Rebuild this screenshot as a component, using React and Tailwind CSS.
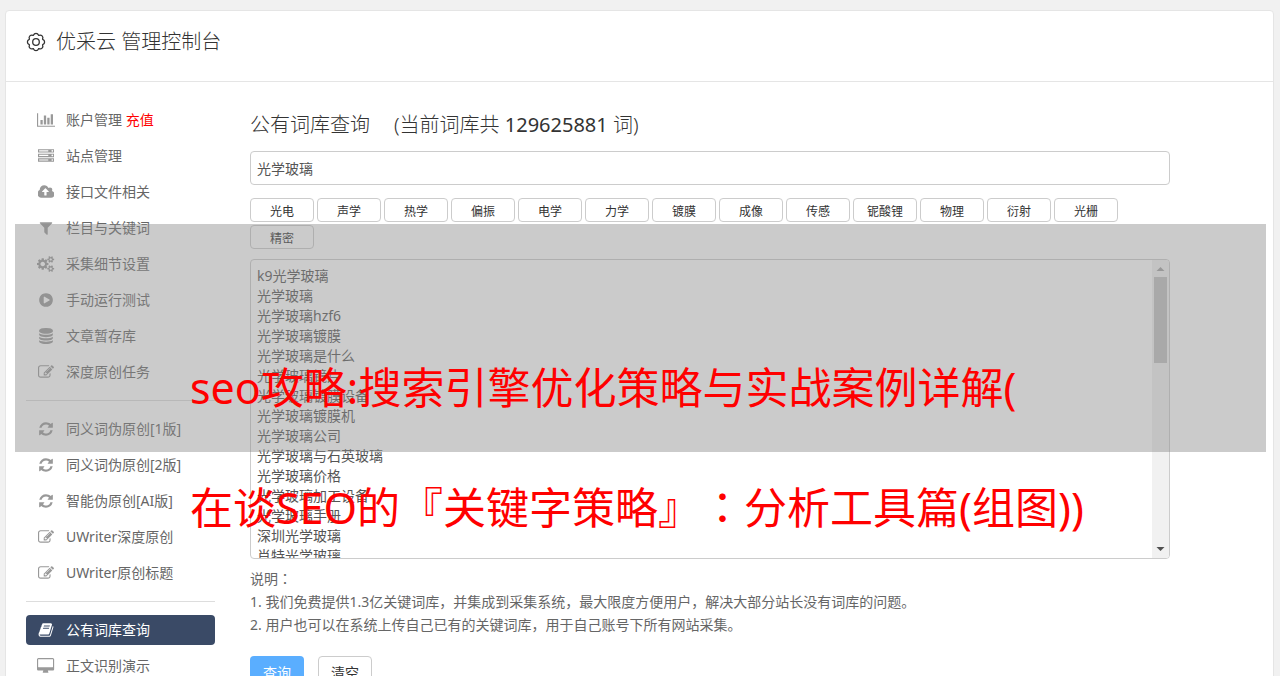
import {useState} from 'react';

const ICONS = {
  chart: {
    width: 2048,
    path: 'M640 896v512h-256v-512h256zm384-512v1024h-256v-1024h256zm1024 1152v128h-2048v-1536h128v1408h1920zm-640-896v768h-256v-768h256zm384-384v1152h-256v-1152h256z',
  },
  server: {
    width: 1792,
    path: 'M128 1408h1024v-128h-1024v128zm0-512h1024v-128h-1024v128zm1568 448q0-40-28-68t-68-28-68 28-28 68 28 68 68 28 68-28 28-68zm-1568-960h1024v-128h-1024v128zm1568 448q0-40-28-68t-68-28-68 28-28 68 28 68 68 28 68-28 28-68zm0-512q0-40-28-68t-68-28-68 28-28 68 28 68 68 28 68-28 28-68zm96 832v384h-1792v-384h1792zm0-512v384h-1792v-384h1792zm0-512v384h-1792v-384h1792z',
  },
  upload: {
    width: 1856,
    path: 'M1216 864q0-14-9-23l-352-352q-9-9-23-9t-23 9l-351 351q-10 12-10 24 0 14 9 23t23 9h224v352q0 13 9.5 22.5t22.5 9.5h192q13 0 22.5-9.5t9.5-22.5v-352h224q13 0 22.5-9.5t9.5-22.5zm640 288q0 159-112.5 271.5t-271.5 112.5h-1088q-185 0-316.5-131.5t-131.5-316.5q0-130 70-240t188-165q-2-30-2-43 0-212 150-362t362-150q156 0 285.5 87t188.5 231q71-62 166-62 106 0 181 75t75 181q0 76-41 138 130 31 213.5 135.5t83.5 238.5z',
  },
  filter: {
    width: 1792,
    path: 'M1595 295q17 41-14 70l-493 493v742q0 42-39 59-13 5-25 5-27 0-45-19l-256-256q-19-19-19-45v-486l-493-493q-31-29-14-70 17-39 59-39h1280q42 0 59 39z',
  },
  cogs: {
    width: 1920,
    path: 'M896 896q0-106-75-181t-181-75-181 75-75 181 75 181 181 75 181-75 75-181zm768 512q0-52-38-90t-90-38-90 38-38 90q0 53 37.5 90.5t90.5 37.5 90.5-37.5 37.5-90.5zm0-1024q0-52-38-90t-90-38-90 38-38 90q0 53 37.5 90.5t90.5 37.5 90.5-37.5 37.5-90.5zm-384 421v185q0 10-7 19.5t-16 10.5l-155 24q-11 35-32 76 34 48 90 115 7 11 7 20 0 12-7 19-23 30-82.5 89.5t-78.5 59.5q-11 0-21-7l-115-90q-37 19-77 31-11 108-23 155-7 24-30 24h-186q-11 0-20-7.5t-10-17.5l-23-153q-34-10-75-31l-118 89q-7 7-20 7-11 0-21-8-144-133-144-160 0-9 7-19 10-14 41-53t47-61q-23-44-35-82l-152-24q-10-1-17-9.5t-7-19.5v-185q0-10 7-19.5t16-10.5l155-24q11-35 32-76-34-48-90-115-7-11-7-20 0-12 7-20 22-30 82-89t79-59q11 0 21 7l115 90q34-18 77-32 11-108 23-154 7-24 30-24h186q11 0 20 7.5t10 17.5l23 153q34 10 75 31l118-89q8-7 20-7 11 0 21 8 144 133 144 160 0 8-7 19-12 16-42 54t-45 60q23 48 34 82l152 23q10 2 17 10.5t7 19.5zm640 533v140q0 16-149 31-12 27-30 52 51 113 51 138 0 4-4 7-122 71-124 71-8 0-46-47t-52-68q-20 2-30 2t-30-2q-14 21-52 68t-46 47q-2 0-124-71-4-3-4-7 0-25 51-138-18-25-30-52-149-15-149-31v-140q0-16 149-31 13-29 30-52-51-113-51-138 0-4 4-7 4-2 35-20t59-34 30-16q8 0 46 46.5t52 67.5q20-2 30-2t30 2q51-71 92-112l6-2q4 0 124 70 4 3 4 7 0 25-51 138 17 23 30 52 149 15 149 31zm0-1024v140q0 16-149 31-12 27-30 52 51 113 51 138 0 4-4 7-122 71-124 71-8 0-46-47t-52-68q-20 2-30 2t-30-2q-14 21-52 68t-46 47q-2 0-124-71-4-3-4-7 0-25 51-138-18-25-30-52-149-15-149-31v-140q0-16 149-31 13-29 30-52-51-113-51-138 0-4 4-7 4-2 35-20t59-34 30-16q8 0 46 46.5t52 67.5q20-2 30-2t30 2q51-71 92-112l6-2q4 0 124 70 4 3 4 7 0 25-51 138 17 23 30 52 149 15 149 31z',
  },
  play: {
    width: 1792,
    path: 'M896 128q209 0 385.5 103t279.5 279.5 103 385.5-103 385.5-279.5 279.5-385.5 103-385.5-103-279.5-279.5-103-385.5 103-385.5 279.5-279.5 385.5-103zm384 823q32-18 32-55t-32-55l-544-320q-31-19-64-1-32 19-32 56v640q0 37 32 56 16 8 32 8 17 0 32-9z',
  },
  database: {
    width: 1792,
    path: 'M896 768q237 0 443-43t325-127v170q0 69-103 128t-280 93.5-385 34.5-385-34.5-280-93.5-103-128v-170q119 84 325 127t443 43zm0 768q237 0 443-43t325-127v170q0 69-103 128t-280 93.5-385 34.5-385-34.5-280-93.5-103-128v-170q119 84 325 127t443 43zm0-384q237 0 443-43t325-127v170q0 69-103 128t-280 93.5-385 34.5-385-34.5-280-93.5-103-128v-170q119 84 325 127t443 43zm0-1152q208 0 385 34.5t280 93.5 103 128v128q0 69-103 128t-280 93.5-385 34.5-385-34.5-280-93.5-103-128v-128q0-69 103-128t280-93.5 385-34.5z',
  },
  edit: {
    width: 1792,
    path: 'M888 1184l116-116-152-152-116 116v56h96v96h56zm440-720q-16-16-33 1l-350 350q-17 17-1 33t33-1l350-350q17-17 1-33zm80 594v190q0 119-84.5 203.5t-203.5 84.5h-832q-119 0-203.5-84.5t-84.5-203.5v-832q0-119 84.5-203.5t203.5-84.5h832q63 0 117 25 15 7 18 23 3 17-9 29l-49 49q-14 14-32 8-23-6-45-6h-832q-66 0-113 47t-47 113v832q0 66 47 113t113 47h832q66 0 113-47t47-113v-126q0-13 9-22l64-64q15-15 35-7t20 29zm-96-738l288 288-672 672h-288v-288zm444 132l-92 92-288-288 92-92q28-28 68-28t68 28l152 152q28 28 28 68t-28 68z',
  },
  refresh: {
    width: 1792,
    path: 'M1639 1056q0 5-1 7-64 268-268 434.5t-478 166.5q-146 0-282.5-55t-243.5-157l-129 129q-19 19-45 19t-45-19-19-45v-448q0-26 19-45t45-19h448q26 0 45 19t19 45-19 45l-137 137q71 66 161 102t187 36q134 0 250-65t186-179q11-17 53-117 8-23 30-23h192q13 0 22.5 9.5t9.5 22.5zm25-800v448q0 26-19 45t-45 19h-448q-26 0-45-19t-19-45 19-45l138-138q-148-137-349-137-134 0-250 65t-186 179q-11 17-53 117-8 23-30 23h-199q-13 0-22.5-9.5t-9.5-22.5v-7q65-268 270-434.5t480-166.5q146 0 284 55.5t245 156.5l130-129q19-19 45-19t45 19 19 45z',
  },
  book: {
    width: 1792,
    path: 'M1703 478q40 57 18 129l-275 906q-19 64-76.5 107.5t-122.5 43.5h-923q-77 0-148.5-53.5t-99.5-131.5q-24-67-2-127 0-4 3-27t4-37q1-8-3-21.5t-3-19.5q2-11 8-21t16.5-23.5 16.5-23.5q23-38 45-91.5t30-91.5q3-10 .5-30t-.5-28q3-11 17-28t17-23q21-36 42-92t25-90q1-9-2.5-32t.5-28q4-13 22-30.5t22-22.5q19-26 42.5-84.5t27.5-96.5q1-8-3-25.5t-2-26.5q2-8 9-18t18-23 17-21q8-12 16.5-30.5t15-35 16-36 19.5-32 26.5-23.5 36-11.5 47.5 5.5l-1 3q38-9 51-9h761q74 0 114 56t18 130l-274 906q-36 119-71.5 153.5t-128.5 34.5h-869q-27 0-38 15-11 16-1 43 24 70 144 70h923q29 0 56-15.5t35-41.5l300-987q7-22 5-57 38 15 59 43zm-1064 2q-4 13 2 22.5t20 9.5h608q13 0 25.5-9.5t16.5-22.5l21-64q4-13-2-22.5t-20-9.5h-608q-13 0-25.5 9.5t-16.5 22.5zm-83 256q-4 13 2 22.5t20 9.5h608q13 0 25.5-9.5t16.5-22.5l21-64q4-13-2-22.5t-20-9.5h-608q-13 0-25.5 9.5t-16.5 22.5z',
  },
  desktop: {
    width: 1920,
    left: -64,
    path: 'M1728 992v-832q0-13-9.5-22.5t-22.5-9.5h-1600q-13 0-22.5 9.5t-9.5 22.5v832q0 13 9.5 22.5t22.5 9.5h1600q13 0 22.5-9.5t9.5-22.5zm128-832v1088q0 66-47 113t-113 47h-544q0 37 16 77.5t32 71 16 43.5q0 26-19 45t-45 19h-512q-26 0-45-19t-19-45q0-14 16-44t32-70 16-78h-544q-66 0-113-47t-47-113v-1088q0-66 47-113t113-47h1600q66 0 113 47t47 113z',
  },
};

const MENU = [
  [
    {icon: 'chart', label: '账户管理', extra: '充值'},
    {icon: 'server', label: '站点管理'},
    {icon: 'upload', label: '接口文件相关'},
    {icon: 'filter', label: '栏目与关键词'},
    {icon: 'cogs', label: '采集细节设置'},
    {icon: 'play', label: '手动运行测试'},
    {icon: 'database', label: '文章暂存库'},
    {icon: 'edit', label: '深度原创任务'},
  ],
  [
    {icon: 'refresh', label: '同义词伪原创[1版]'},
    {icon: 'refresh', label: '同义词伪原创[2版]'},
    {icon: 'refresh', label: '智能伪原创[AI版]'},
    {icon: 'edit', label: 'UWriter深度原创'},
    {icon: 'edit', label: 'UWriter原创标题'},
  ],
  [
    {icon: 'book', label: '公有词库查询', active: true},
    {icon: 'desktop', label: '正文识别演示'},
  ],
];

const TAGS = [
  '光电',
  '声学',
  '热学',
  '偏振',
  '电学',
  '力学',
  '镀膜',
  '成像',
  '传感',
  '铌酸锂',
  '物理',
  '衍射',
  '光栅',
  '精密',
];

const WORDS = [
  'k9光学玻璃',
  '光学玻璃',
  '光学玻璃hzf6',
  '光学玻璃镀膜',
  '光学玻璃是什么',
  '光学玻璃镜片',
  '光学玻璃镀膜设备',
  '光学玻璃镀膜机',
  '光学玻璃公司',
  '光学玻璃与石英玻璃',
  '光学玻璃价格',
  '光学玻璃加工设备',
  '光学玻璃手册',
  '深圳光学玻璃',
  '肖特光学玻璃',
];

const NOTES = [
  '说明：',
  '1. 我们免费提供1.3亿关键词库，并集成到采集系统，最大限度方便用户，解决大部分站长没有词库的问题。',
  '2. 用户也可以在系统上传自己已有的关键词库，用于自己账号下所有网站采集。',
];

function Icon({name}) {
  const {width, left = 0, path} = ICONS[name];
  return (
    <svg
      className="h-4 w-auto"
      viewBox={`${left} 0 ${width} 1792`}
      fill="currentColor"
      aria-hidden="true"
    >
      <path d={path} />
    </svg>
  );
}

function GearIcon() {
  return (
    <svg
      className="size-5"
      viewBox="0 0 20 20"
      fill="none"
      stroke="currentColor"
      strokeWidth="1.3"
      strokeLinejoin="round"
      aria-hidden="true"
    >
      <path d="M7.4 3.3Q8.2 1.4 10 1.4T12.6 3.3L12.9 3.4Q14.8 2.6 16.1 3.9T16.6 7.1L16.7 7.4Q18.6 8.2 18.6 10T16.7 12.6L16.6 12.9Q17.4 14.8 16.1 16.1T12.9 16.6L12.6 16.7Q11.8 18.6 10 18.6T7.4 16.7L7.1 16.6Q5.2 17.4 3.9 16.1T3.4 12.9L3.3 12.6Q1.4 11.8 1.4 10T3.3 7.4L3.4 7.1Q2.6 5.2 3.9 3.9T7.1 3.4Z" />
      <circle cx="10" cy="10" r="3.3" />
    </svg>
  );
}

// The Traditional face centres the full-width colon in its cell
function Colon() {
  return (
    <span className="font-['Noto_Sans_CJK_TC',sans-serif] leading-none">
      ：
    </span>
  );
}

function Sidebar() {
  return (
    <nav className="w-[189px] shrink-0">
      {MENU.map((group, i) => (
        <ul
          key={i}
          className={
            i > 0
              ? 'mt-[13px] flex flex-col gap-1.5 border-t border-[#ddd] pt-[13px]'
              : 'flex flex-col gap-1.5'
          }
        >
          {group.map(({icon, label, extra, active}) => (
            <li key={label}>
              <a
                href="#"
                className={
                  active
                    ? 'flex h-[30px] items-center rounded bg-[#3a4a66] pl-2.5 text-sm text-white'
                    : 'flex h-[30px] items-center rounded pl-2.5 text-sm text-[#666]'
                }
              >
                <span
                  className={
                    active
                      ? 'flex w-5 justify-center'
                      : 'flex w-5 justify-center text-[#999]'
                  }
                >
                  <Icon name={icon} />
                </span>
                <span className="ml-2.5">
                  {label}
                  {extra && <span className="text-[#f00]"> {extra}</span>}
                </span>
              </a>
            </li>
          ))}
        </ul>
      ))}
    </nav>
  );
}

function WordList() {
  return (
    <div className="mt-2.5 flex h-[300px] overflow-hidden rounded border border-[#ccc]">
      <ul className="flex-1 overflow-hidden px-1.5 py-1.5 text-sm/5">
        {WORDS.map((word) => (
          <li key={word}>{word}</li>
        ))}
      </ul>
      <div className="flex w-[17px] flex-col items-center bg-[#f1f1f1]">
        <svg className="size-[17px]" viewBox="0 0 17 17" aria-hidden="true">
          <path d="M4.5 11h8L8.5 7z" fill="#a3a3a3" />
        </svg>
        <div className="h-[86px] w-[13px] bg-[#c1c1c1]" />
        <svg
          className="mt-auto size-[17px]"
          viewBox="0 0 17 17"
          aria-hidden="true"
        >
          <path d="M4.5 6h8L8.5 10z" fill="#505050" />
        </svg>
      </div>
    </div>
  );
}

function Lexicon() {
  const [keyword, setKeyword] = useState('光学玻璃');

  return (
    <main className="max-w-[920px] flex-1 text-[#555]">
      <h2 className="flex gap-6 pt-1 text-xl/8 font-light text-[#333]">
        <span>公有词库查询</span>
        <span>
          (当前词库共 <span className="font-normal">129625881</span> 词)
        </span>
      </h2>
      <input
        type="text"
        aria-label="关键词"
        value={keyword}
        onChange={(e) => setKeyword(e.target.value)}
        className="mt-2.5 block h-[34px] w-full rounded border border-[#ccc] px-1.5 text-sm"
      />
      <div className="mt-[13px] flex flex-wrap gap-[3px]">
        {TAGS.map((tag) => (
          <button
            key={tag}
            type="button"
            onClick={() => setKeyword(tag)}
            className="h-6 w-16 rounded border border-[#ccc] bg-white pt-1 text-xs text-[#333]"
          >
            {tag}
          </button>
        ))}
      </div>
      <WordList />
      <div className="mt-2 text-sm/[23px] text-[#666]">
        <p>
          说明
          <Colon />
        </p>
        {NOTES.slice(1).map((note) => (
          <p key={note}>{note}</p>
        ))}
      </div>
      <div className="mt-5 flex gap-3.5 text-sm">
        <button
          type="button"
          className="h-[34px] w-[54px] rounded bg-[#5aaeff] text-white"
        >
          查询
        </button>
        <button
          type="button"
          onClick={() => setKeyword('')}
          className="h-[34px] w-[54px] rounded border border-[#ccc] bg-white text-[#333]"
        >
          清空
        </button>
      </div>
    </main>
  );
}

function Banner() {
  return (
    <div className="pointer-events-none absolute top-56 right-3.5 left-[15px] h-[228px] bg-[#8c8c8c]/45">
      <p className="mt-[104px] ml-[175px] text-[43px]/[120px] whitespace-nowrap text-[#f00] [text-spacing-trim:space-all]">
        seo攻略:搜索引擎优化策略与实战案例详解(
        <br />
        在谈SEO的『关键字策略』
        <Colon />
        分析工具篇(组图))
      </p>
    </div>
  );
}

export default function App() {
  return (
    <div className="relative h-screen overflow-hidden bg-[#f1f1f1] pt-2.5 pr-1.5 pl-[5px] font-['Noto_Sans','Noto_Sans_CJK_SC',sans-serif]">
      <div className="min-h-full rounded border border-[#e5e5e5] bg-white">
        <header className="flex h-[71px] items-center gap-2.5 border-b border-[#e5e5e5] px-5 pb-2 text-[#333]">
          <GearIcon />
          <h1 className="text-xl font-light">优采云 管理控制台</h1>
        </header>
        <div className="flex gap-[35px] px-5 pt-[23px]">
          <Sidebar />
          <Lexicon />
        </div>
      </div>
      <Banner />
    </div>
  );
}
